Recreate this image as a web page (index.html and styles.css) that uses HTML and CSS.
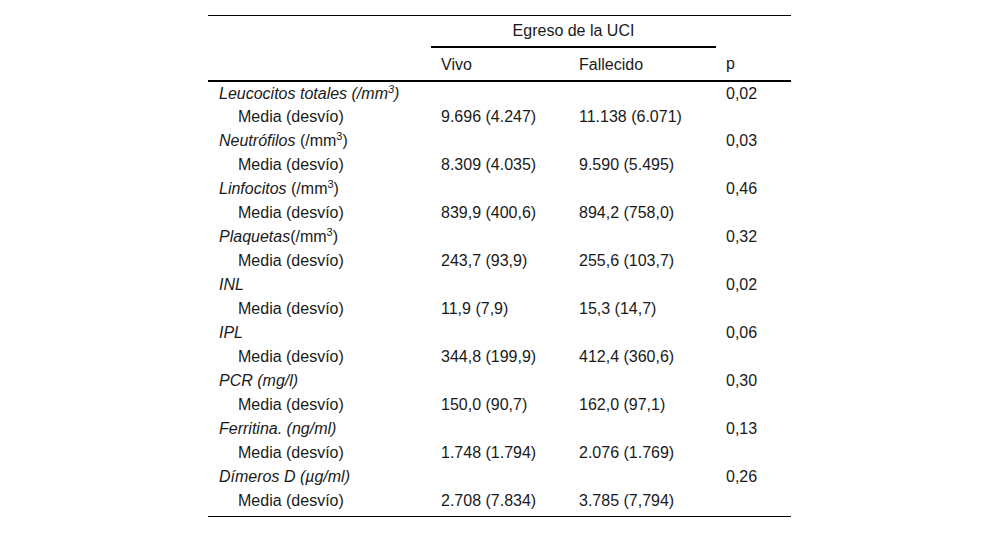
FILE: index.html
```html
<!DOCTYPE html>
<html lang="es">
<head>
<meta charset="utf-8">
<link rel="stylesheet" href="styles.css">
</head>
<body>
<table class="tbl">
  <colgroup>
    <col class="c-label"><col class="c-vivo"><col class="c-fall"><col class="c-p">
  </colgroup>
  <thead>
    <tr class="h1">
      <th></th>
      <th colspan="2" class="group"><span>Egreso de la UCI</span></th>
      <th></th>
    </tr>
    <tr class="h2">
      <th></th>
      <th class="sub">Vivo</th>
      <th class="sub">Fallecido</th>
      <th class="sub">p</th>
    </tr>
  </thead>
  <tbody>
    <tr class="var"><td><i>Leucocitos totales (/mm<sup>3</sup>)</i></td><td></td><td></td><td>0,02</td></tr>
    <tr class="val"><td>Media (desvío)</td><td>9.696 (4.247)</td><td>11.138 (6.071)</td><td></td></tr>
    <tr class="var"><td><i>Neutrófilos</i> (/mm<sup>3</sup>)</td><td></td><td></td><td>0,03</td></tr>
    <tr class="val"><td>Media (desvío)</td><td>8.309 (4.035)</td><td>9.590 (5.495)</td><td></td></tr>
    <tr class="var"><td><i>Linfocitos</i> (/mm<sup>3</sup>)</td><td></td><td></td><td>0,46</td></tr>
    <tr class="val"><td>Media (desvío)</td><td>839,9 (400,6)</td><td>894,2 (758,0)</td><td></td></tr>
    <tr class="var"><td><i>Plaquetas</i>(/mm<sup>3</sup>)</td><td></td><td></td><td>0,32</td></tr>
    <tr class="val"><td>Media (desvío)</td><td>243,7 (93,9)</td><td>255,6 (103,7)</td><td></td></tr>
    <tr class="var"><td><i>INL</i></td><td></td><td></td><td>0,02</td></tr>
    <tr class="val"><td>Media (desvío)</td><td>11,9 (7,9)</td><td>15,3 (14,7)</td><td></td></tr>
    <tr class="var"><td><i>IPL</i></td><td></td><td></td><td>0,06</td></tr>
    <tr class="val"><td>Media (desvío)</td><td>344,8 (199,9)</td><td>412,4 (360,6)</td><td></td></tr>
    <tr class="var"><td><i>PCR (mg/l)</i></td><td></td><td></td><td>0,30</td></tr>
    <tr class="val"><td>Media (desvío)</td><td>150,0 (90,7)</td><td>162,0 (97,1)</td><td></td></tr>
    <tr class="var"><td><i>Ferritina. (ng/ml)</i></td><td></td><td></td><td>0,13</td></tr>
    <tr class="val"><td>Media (desvío)</td><td>1.748 (1.794)</td><td>2.076 (1.769)</td><td></td></tr>
    <tr class="var"><td><i>Dímeros D (µg/ml)</i></td><td></td><td></td><td>0,26</td></tr>
    <tr class="val last"><td>Media (desvío)</td><td>2.708 (7.834)</td><td>3.785 (7,794)</td><td></td></tr>
  </tbody>
</table>
</body>
</html>
```

FILE: styles.css
```css
html, body {
  margin: 0;
  padding: 0;
  background: #ffffff;
}

body {
  font-family: "Liberation Sans", Arial, Helvetica, sans-serif;
  font-size: 16px;
  color: #1a1a1a;
}

.tbl {
  margin: 15px 0 0 208px;
  width: 583px;
  border-collapse: collapse;
  table-layout: fixed;
  border-top: 1px solid #000;
  border-bottom: 1px solid #000;
}

.c-label { width: 223px; }
.c-vivo { width: 138px; }
.c-fall { width: 147px; }
.c-p { width: 75px; }

th, td {
  box-sizing: border-box;
  padding: 0 0 0 10px;
  text-align: left;
  font-weight: normal;
  white-space: nowrap;
  vertical-align: middle;
  line-height: 18px;
}

.h1 th {
  height: 31px;
}

.h1 th.group {
  text-align: center;
  padding: 0;
  border-bottom: 2px solid #000;
}

.h2 th {
  height: 34px;
  padding-top: 2px;
  border-bottom: 2px solid #000;
}

tbody td {
  height: 24px;
  padding-top: 1px;
}

tbody tr.var td:first-child {
  padding-left: 11px;
}

tbody tr.val td:first-child {
  padding-left: 30px;
}

tbody tr.last td {
  height: 28px;
  padding-top: 3px;
  padding-bottom: 6px;
}

sup {
  font-size: 11px;
  line-height: 0;
  vertical-align: 6px;
  font-style: normal;
}

i sup {
  font-style: italic;
}
```
